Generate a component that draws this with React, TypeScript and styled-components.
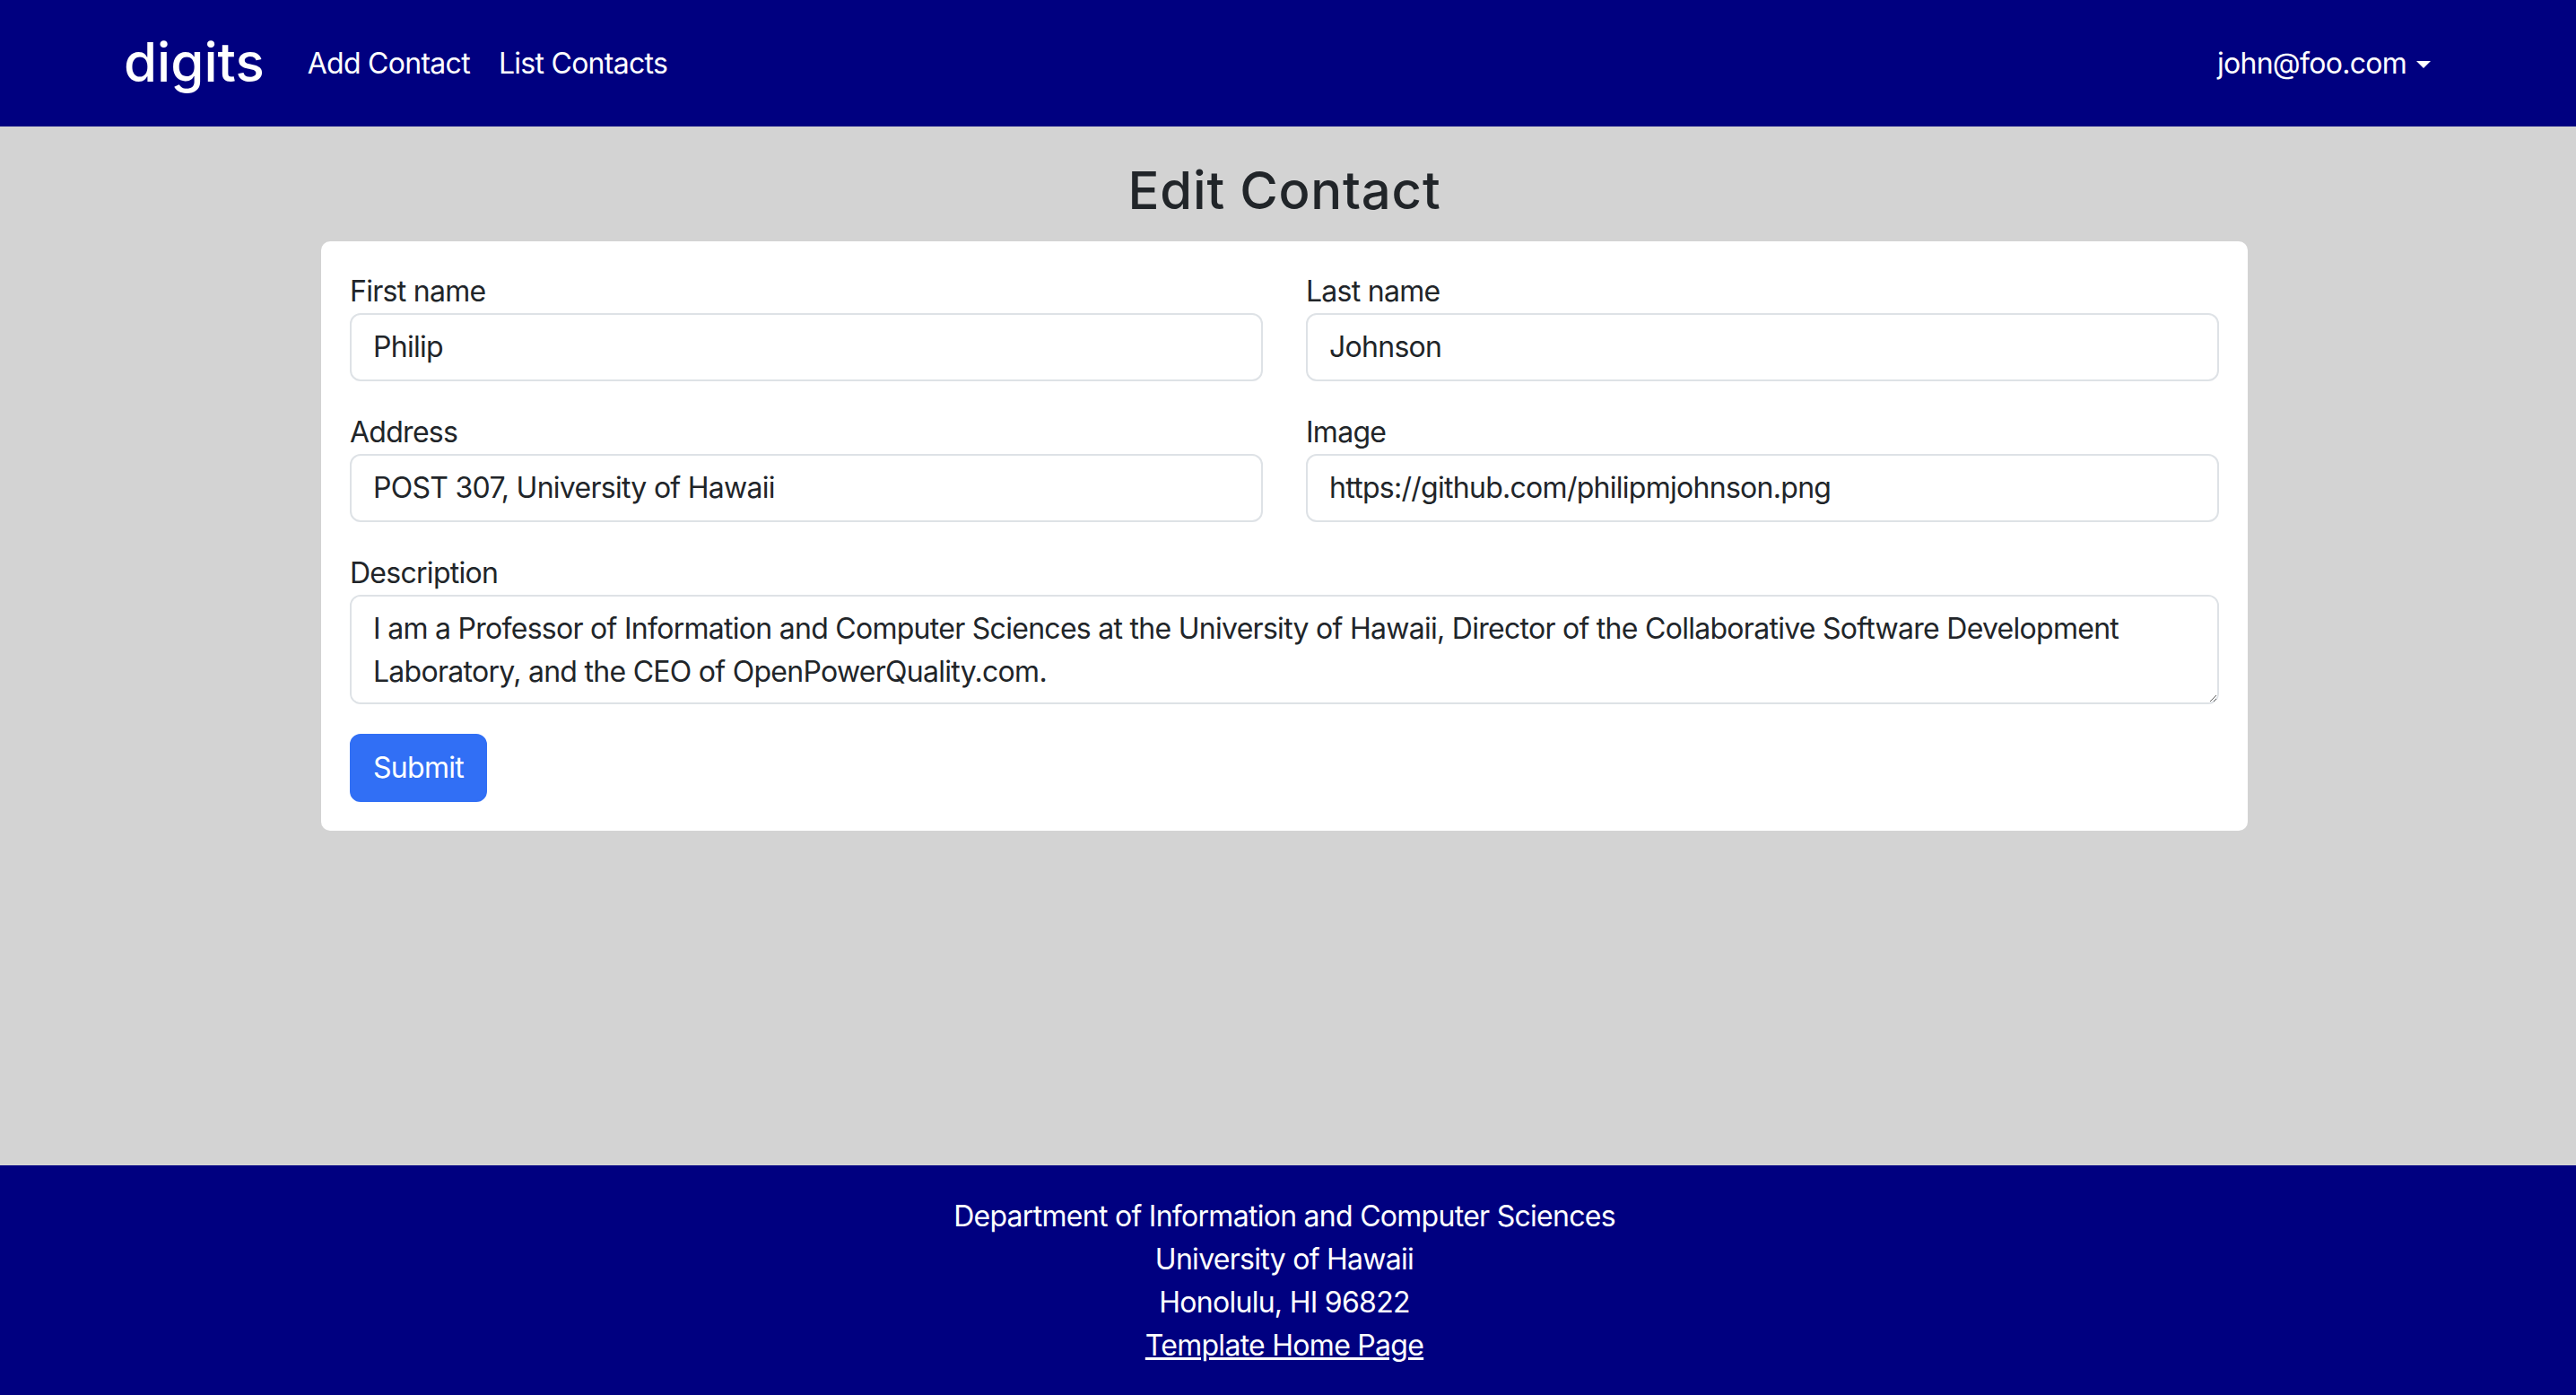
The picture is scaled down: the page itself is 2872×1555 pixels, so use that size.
import React from "react";
import styled, { createGlobalStyle } from "styled-components";

const GlobalStyle = createGlobalStyle`
  *, *::before, *::after { box-sizing: border-box; }
  html, body { margin: 0; padding: 0; }
  body {
    background: #d3d3d3;
    font-family: Inter, "Noto Sans", "Liberation Sans", sans-serif;
    font-size: 32px;
    line-height: 1.5;
    letter-spacing: -0.72px;
    color: #212529;
  }
`;

const Page = styled.div`
  min-height: 100vh;
  display: flex;
  flex-direction: column;
`;

const Navbar = styled.nav`
  height: 141px;
  flex-shrink: 0;
  background: #000080;
  display: flex;
  align-items: center;
  padding: 0 146px 0 138px;
`;

const Brand = styled.a`
  font-size: 60px;
  font-weight: 500;
  color: #ffffff;
  text-decoration: none;
  margin-right: 32px;
  line-height: 1.2;
  letter-spacing: 0;
  margin-top: -4px;
`;

const NavLink = styled.a`
  color: #ffffff;
  text-decoration: none;
  padding: 0 16px;
  font-size: 32px;
`;

const UserMenu = styled.a`
  margin-left: auto;
  color: #ffffff;
  text-decoration: none;
  padding: 0 16px;
  display: flex;
  align-items: center;
  gap: 11px;
`;

const Caret = styled.span`
  width: 0;
  height: 0;
  border-top: 8px solid #ffffff;
  border-left: 8px solid transparent;
  border-right: 8px solid transparent;
  margin-top: 2px;
`;

const Main = styled.main`
  flex: 1;
  padding-top: 37px;
  padding-bottom: 32px;
`;

const Title = styled.h2`
  margin: 0 0 21px;
  padding-right: 8px;
  text-align: center;
  font-size: 58px;
  font-weight: 500;
  line-height: 1.2;
  letter-spacing: 0.8px;
  color: #212529;
`;

const Card = styled.div`
  width: 2148px;
  margin-left: calc(50% - 1078px);
  background: #ffffff;
  border-radius: 10px;
  padding: 32px;
`;

const FormGrid = styled.form`
  display: grid;
  grid-template-columns: 1fr 1fr;
  column-gap: 48px;
  row-gap: 33px;
`;

const Field = styled.div<{ $wide?: boolean }>`
  grid-column: ${(p) => (p.$wide ? "1 / -1" : "auto")};
  display: flex;
  flex-direction: column;
`;

const Label = styled.label`
  display: block;
  line-height: 48px;
`;

const TextInput = styled.input`
  width: 100%;
  height: 76px;
  padding: 12px 24px;
  border: 2px solid #dee2e6;
  border-radius: 12px;
  font-family: inherit;
  font-size: 32px;
  line-height: 48px;
  letter-spacing: inherit;
  color: #212529;
  background: #ffffff;
  outline: none;
`;

const TextArea = styled.textarea`
  width: 100%;
  height: 122px;
  padding: 12px 24px;
  border: 2px solid #dee2e6;
  border-radius: 12px;
  font-family: inherit;
  font-size: 32px;
  line-height: 48px;
  letter-spacing: inherit;
  color: #212529;
  background: #ffffff;
  resize: vertical;
  outline: none;
  display: block;
`;

const SubmitButton = styled.button`
  justify-self: start;
  height: 76px;
  padding: 12px 24px;
  border: 2px solid #316ff5;
  border-radius: 12px;
  background: #316ff5;
  color: #ffffff;
  font-family: inherit;
  font-size: 32px;
  line-height: 48px;
  letter-spacing: inherit;
  cursor: pointer;
`;

const Footer = styled.footer`
  flex-shrink: 0;
  background: #000080;
  color: #ffffff;
  text-align: center;
  padding: 33px 8px 31px 0;
  line-height: 48px;
`;

const FooterLine = styled.div``;

const FooterLink = styled.a`
  color: #ffffff;
  text-decoration: underline;
`;

export default function App() {
  return (
    <>
      <GlobalStyle />
      <Page>
        <Navbar>
          <Brand href="#">digits</Brand>
          <NavLink href="#">Add Contact</NavLink>
          <NavLink href="#">List Contacts</NavLink>
          <UserMenu href="#">
            john@foo.com
            <Caret />
          </UserMenu>
        </Navbar>
        <Main>
          <Title>Edit Contact</Title>
          <Card>
            <FormGrid onSubmit={(e) => e.preventDefault()}>
              <Field>
                <Label htmlFor="firstName">First name</Label>
                <TextInput id="firstName" defaultValue="Philip" />
              </Field>
              <Field>
                <Label htmlFor="lastName">Last name</Label>
                <TextInput id="lastName" defaultValue="Johnson" />
              </Field>
              <Field>
                <Label htmlFor="address">Address</Label>
                <TextInput id="address" defaultValue="POST 307, University of Hawaii" />
              </Field>
              <Field>
                <Label htmlFor="image">Image</Label>
                <TextInput id="image" defaultValue="https://github.com/philipmjohnson.png" />
              </Field>
              <Field $wide>
                <Label htmlFor="description">Description</Label>
                <TextArea
                  id="description"
                  defaultValue="I am a Professor of Information and Computer Sciences at the University of Hawaii, Director of the Collaborative Software Development Laboratory, and the CEO of OpenPowerQuality.com."
                />
              </Field>
              <SubmitButton type="submit">Submit</SubmitButton>
            </FormGrid>
          </Card>
        </Main>
        <Footer>
          <FooterLine>Department of Information and Computer Sciences</FooterLine>
          <FooterLine>University of Hawaii</FooterLine>
          <FooterLine>Honolulu, HI 96822</FooterLine>
          <FooterLine>
            <FooterLink href="#">Template Home Page</FooterLink>
          </FooterLine>
        </Footer>
      </Page>
    </>
  );
}
